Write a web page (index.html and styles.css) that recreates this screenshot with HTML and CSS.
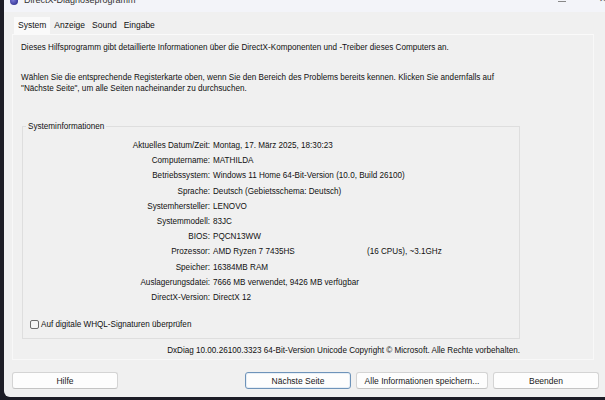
FILE: index.html
```html
<!DOCTYPE html>
<html lang="de">
<head>
<meta charset="utf-8">
<title>DirectX-Diagnoseprogramm</title>
<link rel="stylesheet" href="styles.css">
</head>
<body>
<div class="window">
  <div class="titlebar">
    <span class="appicon"></span>
    <span class="title">DirectX-Diagnoseprogramm</span>
    <span class="spacer"></span>
    <span class="ctl-min"></span>
    <span class="ctl-close">✕</span>
  </div>
  <div class="tabs">
    <span class="tab active">System</span>
    <span class="tab">Anzeige</span>
    <span class="tab">Sound</span>
    <span class="tab">Eingabe</span>
  </div>
  <div class="panel">
    <p class="intro">Dieses Hilfsprogramm gibt detaillierte Informationen über die DirectX-Komponenten und -Treiber dieses Computers an.</p>
    <p class="intro2">Wählen Sie die entsprechende Registerkarte oben, wenn Sie den Bereich des Problems bereits kennen. Klicken Sie andernfalls auf<br>"Nächste Seite", um alle Seiten nacheinander zu durchsuchen.</p>
    <fieldset class="group">
      <legend>Systeminformationen</legend>
      <div class="rows">
        <div class="lbl">Aktuelles Datum/Zeit:</div><div class="val">Montag, 17. März 2025, 18:30:23</div>
        <div class="lbl">Computername:</div><div class="val">MATHILDA</div>
        <div class="lbl">Betriebssystem:</div><div class="val">Windows 11 Home 64-Bit-Version (10.0, Build 26100)</div>
        <div class="lbl">Sprache:</div><div class="val">Deutsch (Gebietsschema: Deutsch)</div>
        <div class="lbl">Systemhersteller:</div><div class="val">LENOVO</div>
        <div class="lbl">Systemmodell:</div><div class="val">83JC</div>
        <div class="lbl">BIOS:</div><div class="val">PQCN13WW</div>
        <div class="lbl">Prozessor:</div><div class="val split"><span class="cpu">AMD Ryzen 7 7435HS</span><span>(16 CPUs), ~3.1GHz</span></div>
        <div class="lbl">Speicher:</div><div class="val">16384MB RAM</div>
        <div class="lbl">Auslagerungsdatei:</div><div class="val">7666 MB verwendet, 9426 MB verfügbar</div>
        <div class="lbl">DirectX-Version:</div><div class="val">DirectX 12</div>
      </div>
      <label class="check"><span class="box"></span>Auf digitale WHQL-Signaturen überprüfen</label>
    </fieldset>
    <div class="copyright">DxDiag 10.00.26100.3323 64-Bit-Version Unicode Copyright © Microsoft. Alle Rechte vorbehalten.</div>
  </div>
  <div class="buttons">
    <button class="btn">Hilfe</button>
    <span class="grow"></span>
    <button class="btn primary">Nächste Seite</button>
    <button class="btn wide">Alle Informationen speichern...</button>
    <button class="btn">Beenden</button>
  </div>
</div>
</body>
</html>
```
FILE: styles.css
```css
html, body {
  margin: 0;
  padding: 0;
  background: #1d1d26;
  width: 605px;
  height: 400px;
  overflow: hidden;
}
.window {
  margin-left: 4px;
  width: 606px;
  height: 397px;
  background: #f0f0f0;
  border-bottom-left-radius: 6px;
  font-family: "Liberation Sans", Arial, sans-serif;
  font-size: 8.15px;
  color: #111;
  overflow: hidden;
}
.titlebar {
  height: 12px;
  background: #f3f4f9;
  display: flex;
  align-items: flex-start;
  overflow: hidden;
}
.appicon {
  width: 8px;
  height: 8px;
  margin: -3px 0 0 6px;
  border-radius: 50%;
  background: radial-gradient(circle at 40% 40%, #7a7ad8, #3a3a9a 70%);
  flex: none;
}
.title {
  margin: -5px 0 0 6px;
  font-size: 9px;
  line-height: 11px;
  color: #333;
}
.spacer { flex: 1; }
.ctl-min {
  width: 8px;
  height: 1px;
  background: #888;
  margin: 1px 33px 0 0;
}
.ctl-close {
  font-size: 9px;
  line-height: 9px;
  margin: -5px 3px 0 0;
  color: #555;
}
.tabs {
  display: flex;
  margin: 5px 0 0 10px;
  height: 17px;
  align-items: stretch;
}
.tab {
  font-size: 8.5px;
  line-height: 17px;
  padding: 0 2px;
  margin-right: 3px;
  color: #111;
}
.tab.active {
  background: #fafafa;
  padding: 0 4px;
  margin-right: 2px;
}
.panel {
  margin-left: 8px;
  width: 582px;
  height: 326px;
  border: 1px solid #f8f8f8;
  border-top-color: #fafafa;
  padding: 7px 0 0 8px;
  box-sizing: border-box;
}
p { margin: 0; line-height: 11px; }
.intro2 { margin-top: 19px; }
.group {
  margin: 27px 0 0 1px;
  padding: 0 0 8px 0;
  width: 498px;
  box-sizing: border-box;
  border: 1px solid #dedede;
  min-width: 0;
}
.group legend {
  margin-left: 3px;
  padding: 0 2px;
  line-height: 11px;
}
.rows {
  display: grid;
  grid-template-columns: 187px 1fr;
  column-gap: 3px;
  padding-top: 6px;
  line-height: 15.2px;
}
.lbl { text-align: right; }
.val { white-space: nowrap; }
.split { display: flex; }
.cpu { width: 154px; flex: none; }
.check {
  display: flex;
  align-items: center;
  margin: 14px 0 0 7px;
  line-height: 11px;
}
.box {
  width: 9px;
  height: 9px;
  border: 1px solid #6d6d6d;
  border-radius: 2px;
  background: #f6f6f6;
  margin-right: 2px;
  box-sizing: border-box;
}
.copyright {
  width: 499px;
  text-align: right;
  margin-top: 6px;
  line-height: 11px;
}
.buttons {
  display: flex;
  margin: 12px 0 0 8px;
  width: 587px;
  gap: 5px;
}
.grow { flex: 1; }
.btn {
  width: 106px;
  height: 17px;
  padding: 0;
  background: #fdfdfd;
  border: 1px solid #d4d4d4;
  border-bottom-color: #c4c4c4;
  border-radius: 3px;
  font-family: "Liberation Sans", Arial, sans-serif;
  font-size: 8.5px;
  color: #1a1a1a;
}
.btn.wide { width: 132px; }
.btn.primary {
  border: 1px solid #6e93b9;
  box-shadow: inset 0 0 0 1px #e6eef6;
}
```
